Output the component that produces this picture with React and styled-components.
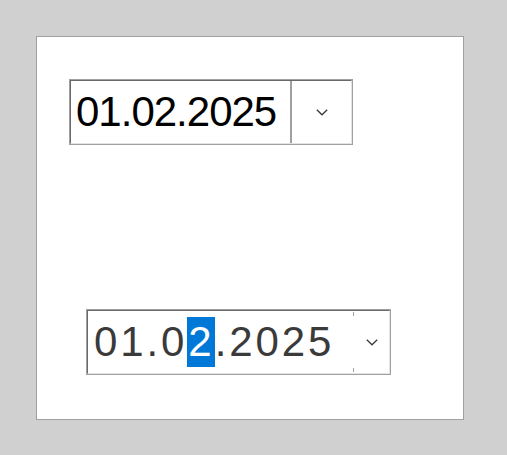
import React from "react";
import styled, { createGlobalStyle } from "styled-components";

const Global = createGlobalStyle`
  html, body { margin: 0; padding: 0; background: #d0d0d0; }
  body { width: 507px; height: 455px; overflow: hidden; font-family: "Liberation Sans", Arial, sans-serif; }
`;

const Page = styled.div`
  padding: 36px 0 0 36px;
`;

const Panel = styled.div`
  box-sizing: border-box;
  width: 428px;
  height: 384px;
  background: #ffffff;
  border: 1px solid #a0a0a0;
  padding-top: 42px;
  display: flex;
  flex-direction: column;
  align-items: flex-start;
  gap: 164px;
`;

const Field = styled.div`
  box-sizing: border-box;
  margin-left: ${(p) => p.$offset}px;
  width: ${(p) => p.$width}px;
  height: 66px;
  border: 1px solid #a0a0a0;
  display: flex;
  background: #fff;
`;

const Inner = styled.div`
  flex: 1;
  display: flex;
  border-top: 1px solid #696969;
  border-left: 1px solid #696969;
  border-right: 1px solid #e3e3e3;
  border-bottom: 1px solid #e3e3e3;
  background: #fff;
`;

const TextArea = styled.div`
  flex: 1;
  display: flex;
  align-items: center;
  padding-left: ${(p) => p.$pad}px;
  font-size: 42px;
  letter-spacing: ${(p) => p.$spacing}px;
  color: ${(p) => p.$color};
  white-space: nowrap;
  line-height: 1;
`;

const Selected = styled.span`
  display: inline-block;
  height: 50px;
  line-height: 50px;
  background: #0078d7;
  color: #ffffff;
  padding-left: 1px;
`;

const Divider = styled.div`
  width: 2px;
  background: #a0a0a0;
`;

const TickDivider = styled.div`
  width: 1px;
  display: flex;
  flex-direction: column;
  justify-content: space-between;
  padding: 1px 0;
  &::before, &::after {
    content: "";
    display: block;
    width: 1px;
    height: 4px;
    background: #a0a0a0;
  }
`;

const Button = styled.div`
  width: ${(p) => p.$width}px;
  display: flex;
  align-items: center;
  justify-content: center;
  padding-top: 1px;
`;

const Chevron = () => (
  <svg width="12" height="7" viewBox="0 0 12 7">
    <polyline points="0.8,0.8 6,5.8 11.2,0.8" fill="none" stroke="#3a3a3a" strokeWidth="1.3" />
  </svg>
);

export default function App() {
  return (
    <>
      <Global />
      <Page>
        <Panel>
          <Field $offset={32} $width={284}>
            <Inner>
              <TextArea $pad={5} $spacing={-1} $color="#000">
                01.02.2025
              </TextArea>
              <Divider />
              <Button $width={59}>
                <Chevron />
              </Button>
            </Inner>
          </Field>
          <Field $offset={49} $width={305}>
            <Inner>
              <TextArea $pad={6} $spacing={2.9} $color="#3a3a3a">
                01.0<Selected>2</Selected>.2025
              </TextArea>
              <TickDivider />
              <Button $width={35}>
                <Chevron />
              </Button>
            </Inner>
          </Field>
        </Panel>
      </Page>
    </>
  );
}
